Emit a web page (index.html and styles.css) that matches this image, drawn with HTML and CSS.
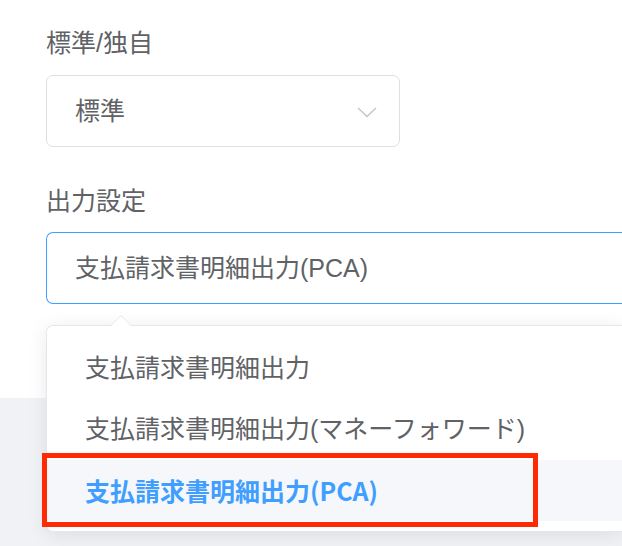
FILE: index.html
```html
<!DOCTYPE html>
<html lang="ja">
<head>
<meta charset="utf-8">
<link rel="stylesheet" href="styles.css">
</head>
<body>
<div class="page">
  <div class="card">
    <div class="field">
      <div class="label">標準/独自</div>
      <div class="select select-narrow">
        <span class="value">標準</span>
        <svg class="chevron" width="20" height="11" viewBox="0 0 20 11"><polyline points="1,1 10,9.5 19,1" fill="none" stroke="#c0c4cc" stroke-width="1.3"/></svg>
      </div>
    </div>
    <div class="field field-second">
      <div class="label">出力設定</div>
      <div class="select select-wide is-focus">
        <span class="value">支払請求書明細出力(PCA)</span>
      </div>
    </div>
  </div>
  <div class="dropdown">
    <div class="arrow"></div>
    <ul class="options">
      <li class="option">支払請求書明細出力</li>
      <li class="option">支払請求書明細出力(マネーフォワード)</li>
      <li class="option selected">支払請求書明細出力(PCA)</li>
    </ul>
  </div>
  <div class="highlight-box"></div>
</div>
</body>
</html>
```
FILE: styles.css
```css
html, body {
  margin: 0;
  padding: 0;
}
body {
  width: 622px;
  height: 546px;
  overflow: hidden;
  background: #f0f2f5;
  font-family: "Liberation Sans", "Noto Sans CJK JP", sans-serif;
  color: #606266;
}
.page {
  position: relative;
  width: 622px;
  height: 546px;
  overflow: hidden;
}
.card {
  background: #ffffff;
  height: 398px;
  padding: 26px 0 0 46px;
  box-sizing: border-box;
}
.field {
  display: flex;
  flex-direction: column;
  gap: 14px;
}
.field-second {
  margin-top: 37px;
  gap: 13px;
}
.label {
  font-size: 25px;
  line-height: 35px;
  color: #606266;
}
.select {
  box-sizing: border-box;
  height: 72px;
  border: 1px solid #dcdfe6;
  border-radius: 7px;
  background: #fff;
  display: flex;
  align-items: center;
  justify-content: space-between;
  padding: 0 22px 0 28px;
}
.select-narrow {
  width: 354px;
}
.select-wide {
  width: 576px;
  border-right: none;
  border-radius: 7px 0 0 7px;
}
.is-focus {
  border-color: #409eff;
}
.value {
  font-size: 25px;
  line-height: 35px;
  color: #606266;
}
.chevron {
  display: block;
  margin-top: 2px;
}
.dropdown {
  position: absolute;
  left: 46px;
  top: 325px;
  width: 576px;
  box-sizing: border-box;
  background: #fff;
  border: 1px solid #e4e7ed;
  border-right: none;
  border-radius: 7px 0 0 7px;
  box-shadow: 0 3px 20px rgba(0, 0, 0, 0.09);
  padding: 12px 0 10px;
}
.arrow {
  position: absolute;
  left: 63px;
  top: -11px;
  width: 0;
  height: 0;
  border-left: 11px solid transparent;
  border-right: 11px solid transparent;
  border-bottom: 11px solid #e4e7ed;
}
.arrow::after {
  content: "";
  position: absolute;
  left: -10px;
  top: 1px;
  width: 0;
  height: 0;
  border-left: 10px solid transparent;
  border-right: 10px solid transparent;
  border-bottom: 10px solid #fff;
}
.options {
  list-style: none;
  margin: 0;
  padding: 0;
}
.option {
  height: 61px;
  line-height: 61px;
  padding: 0 38px;
  font-size: 25px;
  color: #606266;
  white-space: nowrap;
}
.option.selected {
  background: #f5f7fa;
  color: #409eff;
  font-weight: 700;
  font-family: "Noto Sans CJK JP", "Liberation Sans", sans-serif;
}
.highlight-box {
  position: absolute;
  left: 42px;
  top: 453px;
  width: 496px;
  height: 74px;
  box-sizing: border-box;
  border: 5px solid #fe2a05;
}
```
